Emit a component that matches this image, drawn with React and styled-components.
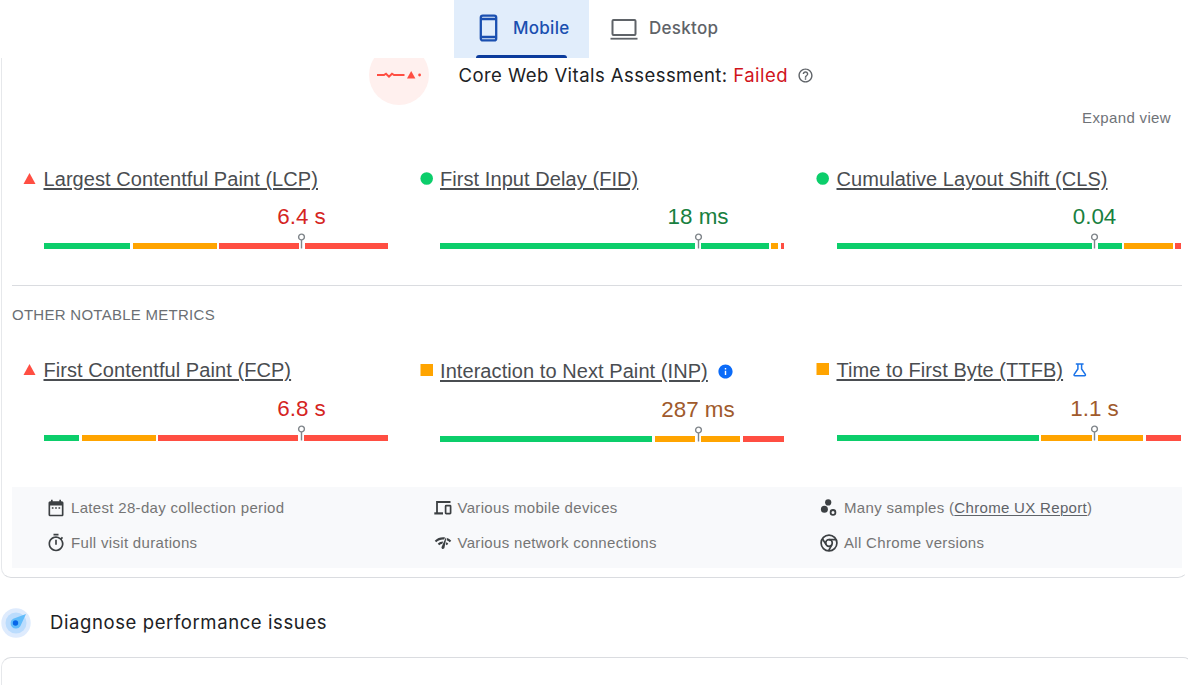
import React from 'react';
import styled, { createGlobalStyle } from 'styled-components';
import {
  MdHelpOutline,
  MdInfo,
  MdDateRange,
  MdOutlineTimer,
  MdNetworkCheck,
} from 'react-icons/md';

const GREEN = '#0cce6b';
const ORANGE = '#ffa400';
const RED = '#ff4e42';

const GlobalStyle = createGlobalStyle`
  * { box-sizing: border-box; }
  body {
    margin: 0;
    background: #fff;
    color: #3c4043;
    font-family: "Liberation Sans", Arial, sans-serif;
    overflow: hidden;
  }
`;

const Page = styled.div`
  width: 1188px;
  height: 685px;
  overflow: hidden;
`;

const Tabs = styled.nav`
  display: flex;
  height: 58px;
  padding-left: 454px;
`;

const Tab = styled.div`
  display: flex;
  flex-direction: column;
  width: ${(p) => p.$width}px;
  padding: 0 ${(p) => p.$pad}px;
  background: ${(p) => (p.$active ? '#e1edfb' : 'transparent')};
  color: ${(p) => (p.$active ? '#1a4fb0' : '#5f6368')};
`;

const TabContent = styled.div`
  display: flex;
  flex: 1;
  align-items: center;
  gap: ${(p) => p.$gap}px;
  padding-left: ${(p) => p.$indent ?? 0}px;
  white-space: nowrap;
  font: 500 17px/24px Inter, sans-serif;
  letter-spacing: 0.27px;

  svg { flex: none; }
  span { margin-top: ${(p) => p.$lift ?? 0}px; }
`;

const TabIndicator = styled.div`
  height: 3px;
  width: 91px;
  border-radius: 3px 3px 0 0;
  background: #0b3b9c;
`;

const Card = styled.section`
  width: ${(p) => (p.$continued ? 1187 : 1192)}px;
  margin-left: 1px;
  border: 1px solid #dadce0;
  border-left-color: #e6e8eb;
  border-radius: ${(p) => (p.$continued ? '0 0 10px 10px' : '10px 10px 0 0')};
  ${(p) => p.$continued && 'border-top: 0; border-right-color: transparent;'}
  height: ${(p) => p.$height}px;
  padding: 0 4px 0 10px;
`;

const Assessment = styled.div`
  display: flex;
  height: 47px;
  padding-left: 357px;
  overflow: hidden;
`;

const Pulse = styled.div`
  display: flex;
  align-items: center;
  justify-content: center;
  width: 60px;
  height: 60px;
  margin-top: -13px;
  border-radius: 50%;
  background: #fff0ee;
`;

const AssessmentTitle = styled.h2`
  display: flex;
  align-items: center;
  height: 24px;
  margin: 5px 0 0 29.5px;
  color: #202124;
  white-space: pre;
  font: 400 18.5px/24px Inter, sans-serif;
  letter-spacing: 0.45px;

  em { font-style: normal; color: #d0131b; }
  svg { margin: 1px 0 0 9px; color: #5f6368; }
`;

const ExpandRow = styled.div`
  display: flex;
  justify-content: flex-end;
  height: 55px;
  padding: 4px 12px 0 0;
  color: #6f7378;
  font-size: 15px;
  line-height: 18px;
  letter-spacing: 0.35px;
`;

const MetricGrid = styled.div`
  display: grid;
  grid-template-columns: 396.5px 396.5px 379px;
  height: ${(p) => p.$height}px;
`;

const Metric = styled.article`
  display: grid;
  grid-template-columns: 31.5px 345px;
  grid-template-rows: 24px auto;
  align-content: start;
  padding-top: ${(p) => p.$top}px;
`;

const Marker = styled.div`
  padding: 5px 0 0 11px;
  line-height: 0;
`;

const MetricName = styled.div`
  display: flex;
  align-items: center;
  white-space: nowrap;
  color: #4a4d51;
  font-size: 20px;
  line-height: 24px;
  letter-spacing: 0.07px;

  u { text-decoration-thickness: 1.5px; text-underline-offset: 2px; }
  svg { margin-left: 9px; }
`;

const Gauge = styled.div`
  grid-column: 2;
  display: flex;
  flex-direction: column;
  padding-top: ${(p) => p.$gap}px;
`;

const Reading = styled.div`
  display: flex;
  flex-direction: column;
  align-items: center;
  align-self: flex-start;
  width: 120px;
  margin-left: 198px;
  color: ${(p) => p.$color};
  font-size: 22.4px;
  line-height: 28px;
  white-space: nowrap;
`;

const Pin = styled.svg`
  display: block;
  width: 9px;
  height: 16px;
  margin: ${(p) => p.$top}px 0 -6px;
`;

const Bar = styled.div`
  display: flex;
  height: 6px;
`;

const Segment = styled.div`
  width: ${(p) => p.$width}px;
  margin-right: ${(p) => p.$gap}px;
  background: ${(p) => p.$color};
`;

const Divider = styled.div`
  height: 1px;
  width: 1170px;
  background: #dadce0;
`;

const Caption = styled.div`
  height: 44px;
  padding-top: 20px;
  color: #6b6f74;
  font-size: 15px;
  line-height: 18px;
  letter-spacing: 0.27px;
`;

const Facts = styled.div`
  display: grid;
  grid-template-columns: 386.5px 386.5px 1fr;
  grid-template-rows: 35px 35px;
  width: 1170px;
  height: 81px;
  padding: 3px 0 0 35px;
  background: #f8f9fb;
`;

const Fact = styled.div`
  display: flex;
  align-items: center;
  color: #757575;
  white-space: pre;
  font-size: 15px;
  letter-spacing: 0.32px;

  u { color: #5f6368; text-underline-offset: 2px; text-decoration-thickness: 1px; }
`;

const FactIcon = styled.div`
  display: flex;
  flex: none;
  align-items: center;
  justify-content: center;
  width: 18px;
  margin-right: 6px;
  color: #3c4043;

  svg { flex: none; width: ${(p) => p.$size ?? 18}px; height: ${(p) => p.$size ?? 18}px; }
`;

const Diagnose = styled.h2`
  display: flex;
  align-items: center;
  gap: 19px;
  height: 79px;
  margin: 0;
  padding: 10px 0 0 1px;
  color: #202124;
  font: 400 18.5px/24px Inter, sans-serif;
  letter-spacing: 0.6px;

  span { margin-top: -1px; }
`;

const PhoneIcon = () => (
  <svg width="19" height="28" viewBox="0 0 19 28" fill="none" stroke="currentColor" strokeWidth="2.3">
    <rect x="1.8" y="1.6" width="15.4" height="24.8" rx="2" />
    <path d="M2 5h15M2 23h15" />
  </svg>
);

const LaptopIcon = () => (
  <svg width="28" height="22" viewBox="0 0 28 22" fill="none" stroke="currentColor" strokeWidth="2">
    <rect x="2.5" y="2" width="23" height="15" rx="1" />
    <path d="M0.5 20.7h27" strokeWidth="1.8" />
  </svg>
);

const PulseIcon = () => (
  <svg width="46" height="12" viewBox="0 0 46 12">
    <path d="M1 6h7l2-1.3 3 3 3-3 2 1.3h10.5" fill="none" stroke={RED} strokeWidth="2" />
    <path d="M35.2 2l4.2 7.5h-8.4z" fill={RED} />
    <circle cx="43.6" cy="6" r="1.4" fill={RED} />
  </svg>
);

const FlaskIcon = () => (
  <svg width="15" height="16" viewBox="0 0 15 16" fill="none" stroke="#1a73e8" strokeWidth="1.5">
    <path d="M3.8 2h7.8M5.9 2v5L2.2 12.3c-.4.7 0 1.4.8 1.4h9.5c.8 0 1.2-.7.8-1.4L9.6 7V2" />
  </svg>
);

const DevicesIcon = () => (
  <svg viewBox="0 0 18 18" fill="none" stroke="currentColor">
    <path d="M16.5 3H3v11.5" strokeWidth="1.8" />
    <path d="M0.3 14.4h8.7" strokeWidth="2.2" />
    <rect x="11.6" y="6.7" width="5" height="8" rx="0.6" strokeWidth="1.7" />
  </svg>
);

const SamplesIcon = () => (
  <svg viewBox="0 0 18 18">
    <circle cx="8.2" cy="3.4" r="3.1" fill="currentColor" />
    <circle cx="4.4" cy="10.2" r="3.5" fill="currentColor" />
    <circle cx="13" cy="13.4" r="2.4" fill="none" stroke="currentColor" strokeWidth="1.8" />
  </svg>
);

const ChromeIcon = () => (
  <svg viewBox="0 0 18 18" fill="none" stroke="currentColor" strokeWidth="1.7">
    <circle cx="9" cy="9" r="7.9" />
    <circle cx="9" cy="9" r="3.3" />
    <path d="M9 5.7h7M6.1 10.6L2.4 4.8M11.9 10.6l-3.4 6.2" />
  </svg>
);

const CompassIcon = () => (
  <svg width="30" height="30" viewBox="0 0 30 30">
    <circle cx="15" cy="15" r="14.7" fill="#deebfd" />
    <circle cx="15" cy="15" r="10.5" fill="#bbdcfd" />
    <path d="M25 6L19.3 18.2A5.3 5.3 0 1 1 12.2 10.7z" fill="#62bdfb" />
    <circle cx="14.5" cy="15" r="2.7" fill="#0867e8" />
  </svg>
);

const STATUS = {
  poor: { color: '#d5251f', marker: <path d="M6.5 1l6 11h-12z" fill={RED} /> },
  good: { color: '#188040', marker: <circle cx="6.7" cy="6.5" r="6.3" fill={GREEN} /> },
  average: { color: '#a05a2c', marker: <rect x="0.5" y="0" width="12.5" height="12" fill={ORANGE} /> },
};

// Each segment is [colour, width, gap after it].
const CORE = [
  { name: 'Largest Contentful Paint (LCP)', value: '6.4 s', status: 'poor',
    segments: [[GREEN, 86.5, 2.5], [ORANGE, 84, 2], [RED, 80, 6], [RED, 83.5, 0]] },
  { name: 'First Input Delay (FID)', value: '18 ms', status: 'good',
    segments: [[GREEN, 254.5, 6], [GREEN, 68, 2.5], [ORANGE, 7, 2.5], [RED, 3.5, 0]] },
  { name: 'Cumulative Layout Shift (CLS)', value: '0.04', status: 'good',
    segments: [[GREEN, 255, 6], [GREEN, 24.5, 2], [ORANGE, 48.5, 2.5], [RED, 6, 0]] },
];

const OTHER = [
  { name: 'First Contentful Paint (FCP)', value: '6.8 s', status: 'poor', gap: 12.5,
    segments: [[GREEN, 35.5, 3], [ORANGE, 73.5, 2], [RED, 140.5, 6], [RED, 83.5, 0]] },
  { name: 'Interaction to Next Paint (INP)', value: '287 ms', status: 'average', gap: 13, drop: 1, pin: 1.5,
    icon: <MdInfo size={17} color="#0b6bf8" />,
    segments: [[GREEN, 212, 2.5], [ORANGE, 40, 6], [ORANGE, 39.5, 3], [RED, 41, 0]] },
  { name: 'Time to First Byte (TTFB)', value: '1.1 s', status: 'average', gap: 12.5,
    icon: <FlaskIcon />,
    segments: [[GREEN, 202.5, 2], [ORANGE, 50.5, 6], [ORANGE, 45.5, 2.5], [RED, 35.5, 0]] },
];

function MetricItem({ metric, top, pinTop }) {
  const status = STATUS[metric.status];
  return (
    <Metric $top={top + (metric.drop ?? 0)}>
      <Marker>
        <svg width="14" height="13" viewBox="0 0 14 13" overflow="visible">{status.marker}</svg>
      </Marker>
      <MetricName><u>{metric.name}</u>{metric.icon}</MetricName>
      <Gauge $gap={metric.gap ?? 12}>
        <Reading $color={status.color}>
          {metric.value}
          <Pin $top={metric.pin ?? pinTop} viewBox="0 0 9 16" fill="none" stroke="#80868b" strokeWidth="1.4">
            <circle cx="4.5" cy="4" r="2.9" />
            <path d="M4.5 7v8.5" />
          </Pin>
        </Reading>
        <Bar>
          {metric.segments.map(([color, width, gap], i) => (
            <Segment key={i} $color={color} $width={width} $gap={gap} />
          ))}
        </Bar>
      </Gauge>
    </Metric>
  );
}

export default function App() {
  return (
    <Page>
      <GlobalStyle />
      <Tabs>
        <Tab $active $width={135} $pad={22}>
          <TabContent $gap={15} $indent={3}><PhoneIcon /><span>Mobile</span></TabContent>
          <TabIndicator />
        </Tab>
        <Tab $width={150} $pad={21}>
          <TabContent $gap={11} $lift={-2}><LaptopIcon /><span>Desktop</span></TabContent>
        </Tab>
      </Tabs>

      <Card $continued $height={520}>
        <Assessment>
          <Pulse><PulseIcon /></Pulse>
          <AssessmentTitle>
            Core Web Vitals Assessment: <em>Failed</em>
            <MdHelpOutline size={17} />
          </AssessmentTitle>
        </Assessment>
        <ExpandRow>Expand view</ExpandRow>
        <MetricGrid $height={125}>
          {CORE.map((m) => <MetricItem key={m.name} metric={m} top={7} pinTop={1.5} />)}
        </MetricGrid>
        <Divider />
        <Caption>OTHER NOTABLE METRICS</Caption>
        <MetricGrid $height={157}>
          {OTHER.map((m) => <MetricItem key={m.name} metric={m} top={28} pinTop={2.5} />)}
        </MetricGrid>
        <Facts>
          <Fact><FactIcon $size={20}><MdDateRange /></FactIcon><span>Latest 28-day collection period</span></Fact>
          <Fact><FactIcon><DevicesIcon /></FactIcon><span>Various mobile devices</span></Fact>
          <Fact><FactIcon><SamplesIcon /></FactIcon><span>Many samples (<u>Chrome UX Report</u>)</span></Fact>
          <Fact><FactIcon $size={20}><MdOutlineTimer /></FactIcon><span>Full visit durations</span></Fact>
          <Fact><FactIcon><MdNetworkCheck /></FactIcon><span>Various network connections</span></Fact>
          <Fact><FactIcon><ChromeIcon /></FactIcon><span>All Chrome versions</span></Fact>
        </Facts>
      </Card>

      <Diagnose><CompassIcon /><span>Diagnose performance issues</span></Diagnose>
      <Card $height={60} />
    </Page>
  );
}
